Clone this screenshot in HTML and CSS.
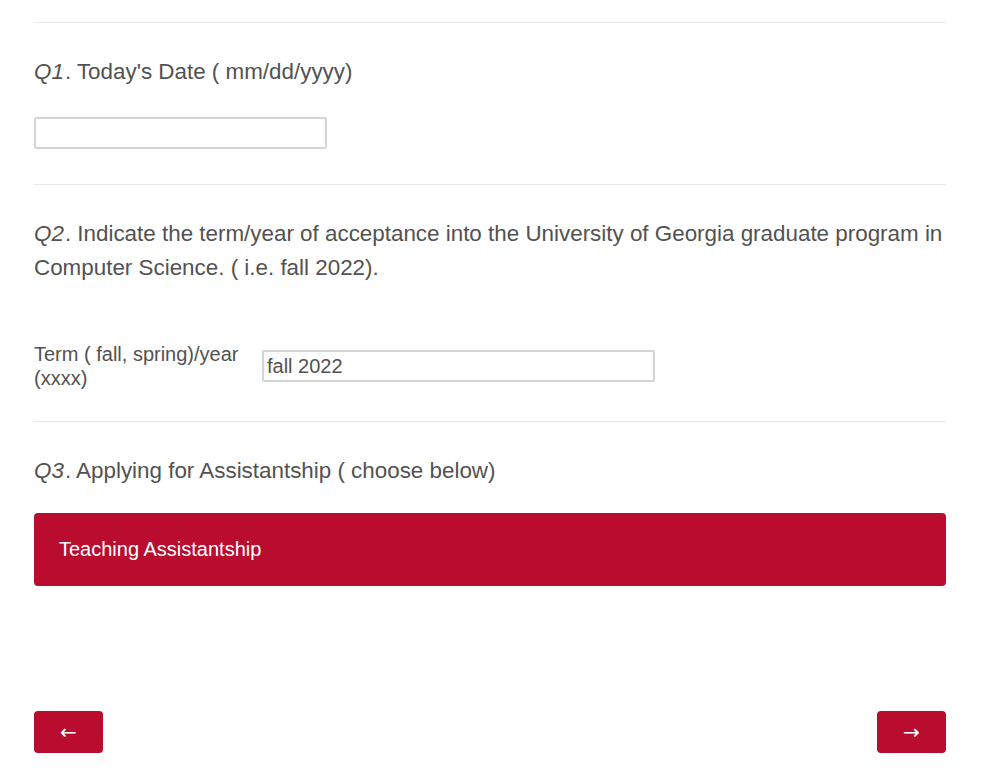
FILE: index.html
```html
<!DOCTYPE html>
<html>
<head>
<meta charset="utf-8">
<link rel="stylesheet" href="styles.css">
</head>
<body>
<div class="survey">
  <div class="sep"></div>
  <div class="question q1">
    <div class="qtext"><em>Q1</em>. Today's Date ( mm/dd/yyyy)</div>
    <input class="text-input short" type="text">
  </div>
  <div class="sep"></div>
  <div class="question q2">
    <div class="qtext"><em>Q2</em>. Indicate the term/year of acceptance into the University of Georgia graduate program in Computer Science. ( i.e. fall 2022).</div>
    <div class="form-row">
      <label class="field-label">Term ( fall, spring)/year (xxxx)</label>
      <input class="text-input wide" type="text" value="fall 2022">
    </div>
  </div>
  <div class="sep"></div>
  <div class="question q3">
    <div class="qtext"><em>Q3</em>. Applying for Assistantship ( choose below)</div>
    <div class="choice">Teaching Assistantship</div>
  </div>
  <div class="nav">
    <button class="nav-btn">&larr;</button>
    <button class="nav-btn">&rarr;</button>
  </div>
</div>
</body>
</html>
```
FILE: styles.css
```css
html, body {
  margin: 0;
  padding: 0;
  background: #fff;
}
body {
  font-family: "Liberation Sans", Arial, sans-serif;
  color: #525252;
}
.survey {
  width: 912px;
  margin-left: 34px;
  padding-top: 22px;
}
.sep {
  height: 1px;
  background: #e8e8e8;
}
.qtext {
  font-size: 22.4px;
  line-height: 34px;
}
.qtext em {
  font-style: italic;
  padding-right: 1px;
}
.q1 {
  padding-top: 32px;
  padding-bottom: 35px;
}
.q1 .qtext {
  margin-bottom: 28px;
}
.text-input {
  box-sizing: border-box;
  height: 32px;
  border: 2px solid #d4d4d4;
  border-radius: 2px;
  font-family: "Liberation Sans", Arial, sans-serif;
  font-size: 20px;
  color: #525252;
  padding: 0 3px;
  margin: 0;
  display: block;
  outline: none;
}
.short { width: 293px; }
.wide { width: 393px; }
.q2 {
  padding-top: 32px;
  padding-bottom: 31px;
}
.form-row {
  display: flex;
  align-items: center;
  margin-top: 57px;
}
.field-label {
  width: 228px;
  font-size: 20px;
  line-height: 24px;
}
.q3 {
  padding-top: 32px;
}
.q3 .qtext {
  margin-bottom: 25px;
}
.choice {
  background: #ba0c2f;
  color: #fff;
  border-radius: 4px;
  height: 73px;
  display: flex;
  align-items: center;
  padding-left: 25px;
  font-size: 20px;
}
.nav {
  display: flex;
  justify-content: space-between;
  margin-top: 125px;
}
.nav-btn {
  width: 69px;
  height: 42px;
  background: #ba0c2f;
  color: #fff;
  border: none;
  border-radius: 4px;
  font-family: "DejaVu Sans", sans-serif;
  font-size: 20px;
  padding: 0;
  display: flex;
  align-items: center;
  justify-content: center;
}
```
